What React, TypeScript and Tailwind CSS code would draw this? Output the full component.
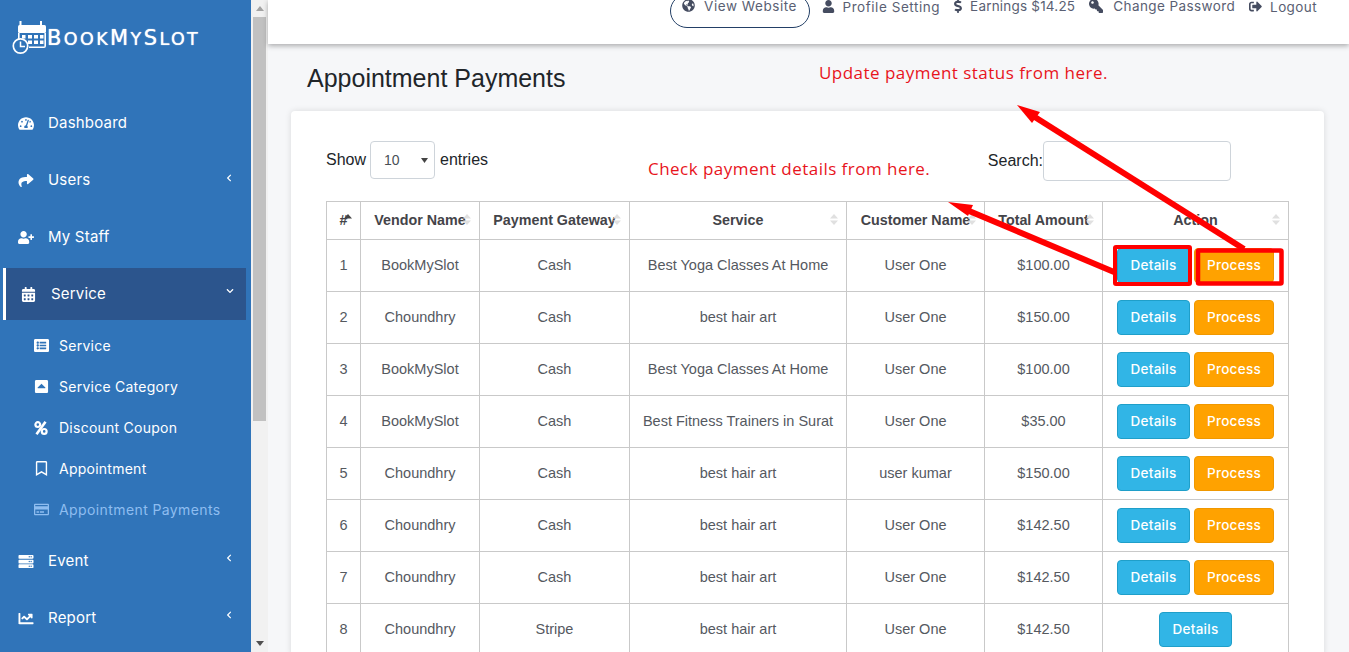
import React from 'react';
import {
  FaTachometerAlt, FaShare, FaUserPlus, FaCalendarAlt, FaListAlt, FaCaretSquareUp,
  FaRegBookmark, FaRegCreditCard, FaServer, FaChartLine, FaGlobeAmericas, FaUser, FaDollarSign,
  FaKey, FaSignOutAlt, FaChevronLeft, FaChevronDown,
} from 'react-icons/fa';

function PercentIcon({ className }: { className?: string }) {
  return (
    <svg className={className} width="15" height="14" viewBox="0 0 15 14" fill="none" stroke="currentColor">
      <circle cx="3.8" cy="3.6" r="2.4" strokeWidth="2.2" />
      <circle cx="10.2" cy="10.4" r="2.4" strokeWidth="2.2" />
      <path d="M11.5 0.8L2.5 13.2" strokeWidth="2.6" />
    </svg>
  );
}

const menu = [
  { label: 'Dashboard', icon: FaTachometerAlt },
  { label: 'Users', icon: FaShare, arrow: true },
  { label: 'My Staff', icon: FaUserPlus },
];

const submenu = [
  { label: 'Service', icon: FaListAlt },
  { label: 'Service Category', icon: FaCaretSquareUp },
  { label: 'Discount Coupon', icon: PercentIcon },
  { label: 'Appointment', icon: FaRegBookmark },
  { label: 'Appointment Payments', icon: FaRegCreditCard, active: true },
];

const topLinks = [
  { label: 'Profile Setting', icon: FaUser, cls: 'gap-[8px] tracking-[0.55px]', iconCls: 'text-[13px]' },
  { label: 'Earnings $14.25', icon: FaDollarSign, cls: 'gap-[8px] tracking-[0.2px]', iconCls: 'h-[14px] w-[8px]' },
  { label: 'Change Password', icon: FaKey, cls: 'gap-[10px] tracking-[0.4px]', iconCls: 'text-[14px] -scale-x-100' },
  { label: 'Logout', icon: FaSignOutAlt, cls: 'gap-[8px] tracking-[0.4px]', iconCls: 'text-[13px]' },
];

const payments = [
  ['1', 'BookMySlot', 'Cash', 'Best Yoga Classes At Home', 'User One', '$100.00'],
  ['2', 'Choundhry', 'Cash', 'best hair art', 'User One', '$150.00'],
  ['3', 'BookMySlot', 'Cash', 'Best Yoga Classes At Home', 'User One', '$100.00'],
  ['4', 'BookMySlot', 'Cash', 'Best Fitness Trainers in Surat', 'User One', '$35.00'],
  ['5', 'Choundhry', 'Cash', 'best hair art', 'user kumar', '$150.00'],
  ['6', 'Choundhry', 'Cash', 'best hair art', 'User One', '$142.50'],
  ['7', 'Choundhry', 'Cash', 'best hair art', 'User One', '$142.50'],
  ['8', 'Choundhry', 'Stripe', 'best hair art', 'User One', '$142.50'],
];

const columns = [
  { label: '#', width: 'w-[34px]' },
  { label: 'Vendor Name', width: 'w-[119px]' },
  { label: 'Payment Gateway', width: 'w-[150px]' },
  { label: 'Service', width: 'w-[217px]' },
  { label: 'Customer Name', width: 'w-[138px]' },
  { label: 'Total Amount', width: 'w-[118px]' },
  { label: 'Action', width: 'w-[186px]' },
];

function SortCarets({ sorted }: { sorted?: boolean }) {
  return (
    <svg className="absolute right-[8px] top-[12px]" width="8" height="11" viewBox="0 0 8 11">
      <path d="M4 0L8 4.5H0z" fill={sorted ? '#444' : '#e0e0e0'} />
      {!sorted && <path d="M4 11L0 6.5h8z" fill="#e0e0e0" />}
    </svg>
  );
}

function Logo() {
  return (
    <svg width="35" height="34" viewBox="0 0 35 34" fill="none" className="shrink-0">
      <rect x="6" y="4" width="28" height="8" rx="1.5" fill="#fff" />
      <rect x="7.5" y="0" width="2" height="6" fill="#fff" />
      <rect x="28" y="0" width="2" height="6" fill="#fff" />
      <path d="M6 12h1.6v6H6zM32.4 12H34v13a2 2 0 0 1-2 2H17v-1.6h15.4z" fill="#fff" />
      <path d="M10 14h3.5v3.5H10zM16 14h4v3.5h-4zM22 14h4v3.5h-4zM28 14h3.5v3.5H28zM16 19.5h4V23h-4zM22 19.5h4V23h-4zM28 19.5h3.5V23H28z" fill="#fff" />
      <circle cx="8.5" cy="25" r="7.2" stroke="#fff" strokeWidth="1.7" fill="#3074b9" />
      <path d="M8.5 20.5V25.5H13" stroke="#fff" strokeWidth="1.5" />
    </svg>
  );
}

function Button({ color, children }: { color: 'blue' | 'orange'; children: React.ReactNode }) {
  const cls = color === 'blue'
    ? 'w-[73px] bg-[#31b5e6] border-[#1f9fc9]'
    : 'w-[80px] bg-[#ffa200] border-[#f09800]';
  return (
    <button className={`h-[35px] rounded-[4px] border text-[13.5px] font-medium tracking-[0.3px] text-white font-['Inter',sans-serif] ${cls}`}>
      {children}
    </button>
  );
}

export default function App() {
  return (
    <div className="relative flex h-[652px] w-[1349px] overflow-hidden bg-[#f6f7f9] font-['Liberation_Sans',sans-serif]">
      <aside className="flex h-full w-[251px] shrink-0 flex-col bg-[#3074b9] pl-[3px] text-white font-['Inter',sans-serif]">
        <div className="flex h-[95px] shrink-0 items-start pl-[9px] pt-[21px]">
          <Logo />
          <span className="mt-[5px] text-[21px] leading-[24px] tracking-[2.4px] [text-shadow:0_0_1px_#fff] font-['DejaVu_Sans',sans-serif]">
            B<span className="text-[17.5px] uppercase">ook</span>M<span className="text-[17.5px] uppercase">y</span>S<span className="text-[17.5px] uppercase">lot</span>
          </span>
        </div>
        <nav className="flex flex-col">
          {menu.map((item) => {
            const Icon = item.icon;
            return (
              <div key={item.label} className="flex h-[57px] items-center pl-[15px] pr-[18px] text-[15px] tracking-[0.2px]">
                <Icon className="w-[16px] text-[15px]" />
                <span className="ml-[14px] flex-1">{item.label}</span>
                {item.arrow && <FaChevronLeft className="mb-[6px] text-[8px]" />}
              </div>
            );
          })}
          <div className="mr-[5px] mt-[2px] flex h-[52px] items-center border-l-[3px] border-white bg-[#2c558d] pl-[15px] pr-[12px] text-[15px] tracking-[0.2px]">
            <FaCalendarAlt className="w-[15px] text-[15px]" />
            <span className="ml-[15px] flex-1">Service</span>
            <FaChevronDown className="mb-[6px] text-[8px]" />
          </div>
          <div className="flex flex-col pt-[5px]">
            {submenu.map((item) => {
              const Icon = item.icon;
              return (
                <div
                  key={item.label}
                  className={`flex h-[41px] items-center pl-[31px] text-[14px] ${item.active ? 'tracking-[0.4px] text-[#8ebdf0]' : 'tracking-[0.25px] text-white'}`}
                >
                  <Icon className="w-[15px] text-[15px]" />
                  <span className="ml-[10px]">{item.label}</span>
                </div>
              );
            })}
          </div>
          {['Event', 'Report'].map((label) => {
            const Icon = label === 'Event' ? FaServer : FaChartLine;
            return (
              <div key={label} className="flex h-[57px] items-center pl-[15px] pr-[18px] pt-[5px] text-[15px] tracking-[0.2px]">
                <Icon className="w-[16px] text-[15px]" />
                <span className="ml-[14px] flex-1">{label}</span>
                <FaChevronLeft className="mb-[6px] text-[8px]" />
              </div>
            );
          })}
        </nav>
      </aside>

      <div className="flex h-full w-[17px] shrink-0 flex-col items-center justify-between bg-[#f1f1f1]">
        <div className="flex h-[17px] w-full items-center justify-center">
          <svg width="8" height="5" viewBox="0 0 8 5"><path d="M4 0l4 5H0z" fill="#a3a3a3" /></svg>
        </div>
        <div className="mb-auto h-[404px] w-[13px] bg-[#c1c1c1]" />
        <div className="flex h-[17px] w-full items-center justify-center">
          <svg width="8" height="5" viewBox="0 0 8 5"><path d="M4 5l4-5H0z" fill="#505050" /></svg>
        </div>
      </div>

      <main className="flex min-w-0 flex-1 flex-col">
        <header className="flex h-[44px] shrink-0 items-end justify-end gap-[14px] overflow-hidden bg-white pb-[31px] pr-[32px] text-[13.5px] text-[#5a5f73] shadow-[0_2px_5px_rgba(0,0,0,0.3)] font-['Inter',sans-serif]">
          <a className="mb-[-15px] mr-[-2px] flex h-[34px] w-[140px] shrink-0 items-end justify-center gap-[9px] rounded-[17px] border border-[#233f66] pb-[15px] leading-[12px] tracking-[0.55px]">
            <FaGlobeAmericas className="text-[13px] text-[#454c60]" />
            View Website
          </a>
          {topLinks.map((link) => {
            const Icon = link.icon;
            return (
              <a key={link.label} className={`flex items-center leading-[12px] ${link.cls}`}>
                <Icon className={`text-[#454c60] ${link.iconCls}`} />
                {link.label}
              </a>
            );
          })}
        </header>

        <h1 className="ml-[39px] mt-[19px] h-[48px] shrink-0 text-[25px] leading-[30px] text-[#212529]">Appointment Payments</h1>

        <section className="ml-[23px] w-[1033px] flex-1 shrink-0 rounded-t-[4px] bg-white px-[35px] pt-[30px] shadow-[0_0_6px_rgba(0,0,0,0.12)]">
          <div className="flex h-[60px] items-start justify-between text-[16px] leading-[38px] text-[#212529]">
            <label className="flex items-start">
              Show
              <span className="ml-[4px] mr-[5px] flex h-[38px] w-[65px] items-center justify-between rounded-[4px] border border-[#ced4da] pl-[13px] pr-[6px] text-[14px] text-[#495057]">
                10
                <svg width="7" height="5" viewBox="0 0 7 5"><path d="M0 0h7L3.5 5z" fill="#444" /></svg>
              </span>
              entries
            </label>
            <label className="mr-[58px] flex items-start leading-[40px]">
              Search:
              <span className="block h-[40px] w-[188px] rounded-[4px] border border-[#ced4da]" />
            </label>
          </div>

          <table className="w-[963px] table-fixed border-collapse text-center text-[14.5px] text-[#55595f]">
            <thead>
              <tr className="h-[38px]">
                {columns.map((col, i) => (
                  <th key={col.label} className={`relative border border-[#c9c9c9] p-0 text-[14.3px] font-bold text-[#444449] ${col.width}`}>
                    {col.label}
                    <SortCarets sorted={i === 0} />
                  </th>
                ))}
              </tr>
            </thead>
            <tbody>
              {payments.map((row) => (
                <tr key={row[0]} className="h-[52px]">
                  {row.map((cell, i) => (
                    <td key={i} className="border border-[#c9c9c9] p-0">{cell}</td>
                  ))}
                  <td className="border border-[#c9c9c9] p-0">
                    <div className="flex justify-center gap-[4px]">
                      <Button color="blue">Details</Button>
                      {row[2] === 'Cash' && <Button color="orange">Process</Button>}
                    </div>
                  </td>
                </tr>
              ))}
            </tbody>
          </table>
        </section>
      </main>

      {/* annotations pasted on top of the screenshot */}
      <span className="absolute left-[819px] top-[62px] text-[17px] leading-[22px] tracking-[0.47px] text-[#e8141c] font-['Open_Sans',sans-serif]">
        Update payment status from here.
      </span>
      <span className="absolute left-[648px] top-[158px] text-[17px] leading-[22px] tracking-[0.47px] text-[#e8141c] font-['Open_Sans',sans-serif]">
        Check payment details from here.
      </span>
      <svg className="pointer-events-none absolute left-0 top-0" width="1349" height="652" viewBox="0 0 1349 652" fill="none">
        <rect x="1115" y="247" width="75" height="37" rx="1" stroke="#ff0000" strokeWidth="4" />
        <rect x="1198" y="250.5" width="83.5" height="33" rx="1" stroke="#ff0000" strokeWidth="4.5" />
        <path d="M1244 249L1030 114" stroke="#ff0000" strokeWidth="6" />
        <path d="M1017 105L1040 112L1032 123z" fill="#ff0000" />
        <path d="M1114 272L962 208" stroke="#ff0000" strokeWidth="6" />
        <path d="M948 202L973 205L968 216z" fill="#ff0000" />
      </svg>
    </div>
  );
}
